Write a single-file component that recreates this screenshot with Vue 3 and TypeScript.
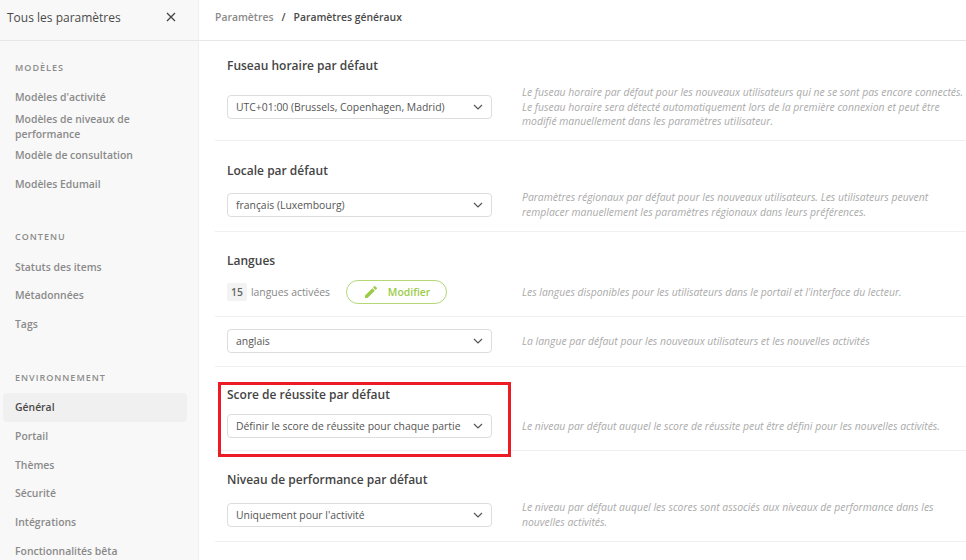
<script setup lang="ts">
interface NavGroup {
  title: string;
  items: string[];
}

const groups: NavGroup[] = [
  { title: "Modèles", items: ["Modèles d'activité", "Modèles de niveaux de performance", "Modèle de consultation", "Modèles Edumail"] },
  { title: "Contenu", items: ["Statuts des items", "Métadonnées", "Tags"] },
  { title: "Environnement", items: ["Général", "Portail", "Thèmes", "Sécurité", "Intégrations", "Fonctionnalités bêta"] },
];
</script>

<template>
  <div class="page">
    <aside class="sidebar">
      <header class="side-head">
        <span class="side-title">Tous les paramètres</span>
        <svg class="close" width="10" height="10" viewBox="0 0 10 10"><path d="M1 1l8 8M9 1l-8 8" stroke="#444" stroke-width="1.3" fill="none" /></svg>
      </header>
      <nav class="side-nav">
        <section v-for="g in groups" :key="g.title" class="group">
          <h4 class="group-title">{{ g.title }}</h4>
          <a v-for="item in g.items" :key="item" class="nav-item" :class="{ active: item === 'Général' }">{{ item }}</a>
        </section>
      </nav>
    </aside>

    <main class="main">
      <header class="crumbs">
        <span class="crumb-root">Paramètres</span>
        <span class="crumb-sep">/</span>
        <span class="crumb-cur">Paramètres généraux</span>
      </header>

      <section class="row row-tz">
        <h3 class="row-title">Fuseau horaire par défaut</h3>
        <div class="line">
          <div class="select"><span>UTC+01:00 (Brussels, Copenhagen, Madrid)</span><svg class="chev" width="10" height="6" viewBox="0 0 10 6"><path d="M1 1l4 4 4-4" /></svg></div>
          <p class="desc">Le fuseau horaire par défaut pour les nouveaux utilisateurs qui ne se sont pas encore connectés. Le fuseau horaire sera détecté automatiquement lors de la première connexion et peut être modifié manuellement dans les paramètres utilisateur.</p>
        </div>
      </section>

      <section class="row row-locale">
        <h3 class="row-title">Locale par défaut</h3>
        <div class="line">
          <div class="select"><span>français (Luxembourg)</span><svg class="chev" width="10" height="6" viewBox="0 0 10 6"><path d="M1 1l4 4 4-4" /></svg></div>
          <p class="desc">Paramètres régionaux par défaut pour les nouveaux utilisateurs. Les utilisateurs peuvent remplacer manuellement les paramètres régionaux dans leurs préférences.</p>
        </div>
      </section>

      <section class="row row-lang">
        <h3 class="row-title">Langues</h3>
        <div class="line">
          <div class="lang-ctl">
            <span class="count">15</span>
            <span class="count-label">langues activées</span>
            <button class="edit">
              <svg width="16" height="16" viewBox="0 0 24 24"><path d="M3 17.25V21h3.75L17.81 9.94l-3.75-3.75L3 17.25zM20.71 7.04a1 1 0 0 0 0-1.41l-2.34-2.34a1 1 0 0 0-1.41 0l-1.83 1.83 3.75 3.75 1.83-1.83z" fill="#9ccb4a" /></svg>
              <span>Modifier</span>
            </button>
          </div>
          <p class="desc">Les langues disponibles pour les utilisateurs dans le portail et l'interface du lecteur.</p>
        </div>
      </section>

      <section class="row row-default-lang">
        <div class="line">
          <div class="select"><span>anglais</span><svg class="chev" width="10" height="6" viewBox="0 0 10 6"><path d="M1 1l4 4 4-4" /></svg></div>
          <p class="desc">La langue par défaut pour les nouveaux utilisateurs et les nouvelles activités</p>
        </div>
      </section>

      <section class="row row-score">
        <div class="highlight"></div>
        <h3 class="row-title">Score de réussite par défaut</h3>
        <div class="line">
          <div class="select"><span>Définir le score de réussite pour chaque partie</span><svg class="chev" width="10" height="6" viewBox="0 0 10 6"><path d="M1 1l4 4 4-4" /></svg></div>
          <p class="desc">Le niveau par défaut auquel le score de réussite peut être défini pour les nouvelles activités.</p>
        </div>
      </section>

      <section class="row row-perf">
        <h3 class="row-title">Niveau de performance par défaut</h3>
        <div class="line">
          <div class="select"><span>Uniquement pour l'activité</span><svg class="chev" width="10" height="6" viewBox="0 0 10 6"><path d="M1 1l4 4 4-4" /></svg></div>
          <p class="desc">Le niveau par défaut auquel les scores sont associés aux niveaux de performance dans les nouvelles activités.</p>
        </div>
      </section>
    </main>
  </div>
</template>

<style>
html, body { margin: 0; background: #fff; overflow: hidden; }
</style>

<style scoped>
.page {
  display: flex;
  width: 966px;
  height: 560px;
  overflow: hidden;
  font-family: "Open Sans", "Noto Sans", sans-serif;
  color: #444;
}
.sidebar {
  width: 198px;
  flex-shrink: 0;
  background: #f8f8f8;
  border-right: 1px solid #efefef;
}
.side-head {
  display: flex;
  align-items: center;
  justify-content: space-between;
  height: 41px;
  padding: 0 22px 6px 7px;
  box-sizing: border-box;
  border-bottom: 1px solid #e6e6e6;
}
.side-title { font-size: 12px; color: #4a4a4a; }
.side-nav { padding: 0 11px 0 3px; }
.group { margin-bottom: 23.5px; }
.group:first-child { padding-top: 12px; }
.group-title {
  margin: 0;
  height: 30.5px;
  padding-left: 12px;
  line-height: 30px;
  font-size: 9px;
  font-weight: 600;
  letter-spacing: 1px;
  text-transform: uppercase;
  color: #8c8c8c;
}
.nav-item {
  display: flex;
  align-items: center;
  height: 28.8px;
  padding-left: 12px;
  font-size: 10.4px;
  line-height: 15px;
  font-weight: 600;
  color: #8a8a8a;
  border-radius: 4px;
}
.nav-item.active { background: #f0f0f0; color: #4a4a4a; }

.main { flex: 1; min-width: 0; }
.crumbs {
  display: flex;
  align-items: center;
  gap: 8px;
  height: 41px;
  padding: 0 0 6px 16px;
  box-sizing: border-box;
  border-bottom: 1px solid #e6e6e6;
  font-size: 10.4px;
  font-weight: 600;
}
.crumb-root { color: #8a8a8a; }
.crumb-sep, .crumb-cur { color: #4a4a4a; }

.row {
  position: relative;
  margin-left: 16px;
  padding-left: 12px;
  border-bottom: 1px solid #f0f0f0;
  box-sizing: border-box;
}
.row-title {
  margin: 0 0 9px;
  font-size: 12px;
  line-height: 20px;
  font-weight: 600;
  color: #444;
}
.line {
  display: flex;
  align-items: center;
  gap: 30px;
}
.select {
  display: flex;
  align-items: center;
  justify-content: space-between;
  width: 265px;
  height: 24px;
  flex-shrink: 0;
  padding: 0 8px;
  box-sizing: border-box;
  border: 1px solid #ddd;
  border-radius: 4px;
  font-size: 10.4px;
  color: #555;
  white-space: nowrap;
}
.chev path { fill: none; stroke: #555; stroke-width: 1.2; }
.desc {
  margin: 0;
  flex: 1;
  padding-right: 2px;
  font-size: 10.4px;
  line-height: 14.5px;
  font-style: italic;
  color: #aaa;
}
.row-tz { padding-top: 15px; height: 100px; }
.row-locale { padding-top: 20px; height: 91px; }
.row-lang { padding-top: 19px; height: 85px; }
.row-default-lang { padding-top: 12px; height: 50px; }
.row-score { padding-top: 18px; height: 84px; }
.row-perf { padding-top: 19px; height: 91px; }
.row-perf .row-title { margin-bottom: 10px; }

.lang-ctl {
  display: flex;
  align-items: center;
  width: 265px;
  flex-shrink: 0;
  height: 24px;
}
.count {
  padding: 0 4px;
  height: 18px;
  line-height: 18px;
  background: #f3f3f3;
  border-radius: 2px;
  font-size: 10.4px;
  font-weight: 600;
  color: #666;
}
.count-label { margin-left: 4px; font-size: 10.4px; color: #888; }
.edit {
  display: flex;
  align-items: center;
  justify-content: center;
  gap: 9px;
  margin-left: 16px;
  width: 101px;
  height: 24px;
  padding: 0;
  background: #fff;
  border: 1px solid #b5d776;
  border-radius: 12px;
  font: 600 10.4px "Open Sans", sans-serif;
  color: #9ccb4a;
}
.highlight {
  position: absolute;
  left: 3px;
  top: 15px;
  width: 293px;
  height: 75px;
  box-sizing: border-box;
  border: 3px solid #ed1c24;
  pointer-events: none;
}
</style>
